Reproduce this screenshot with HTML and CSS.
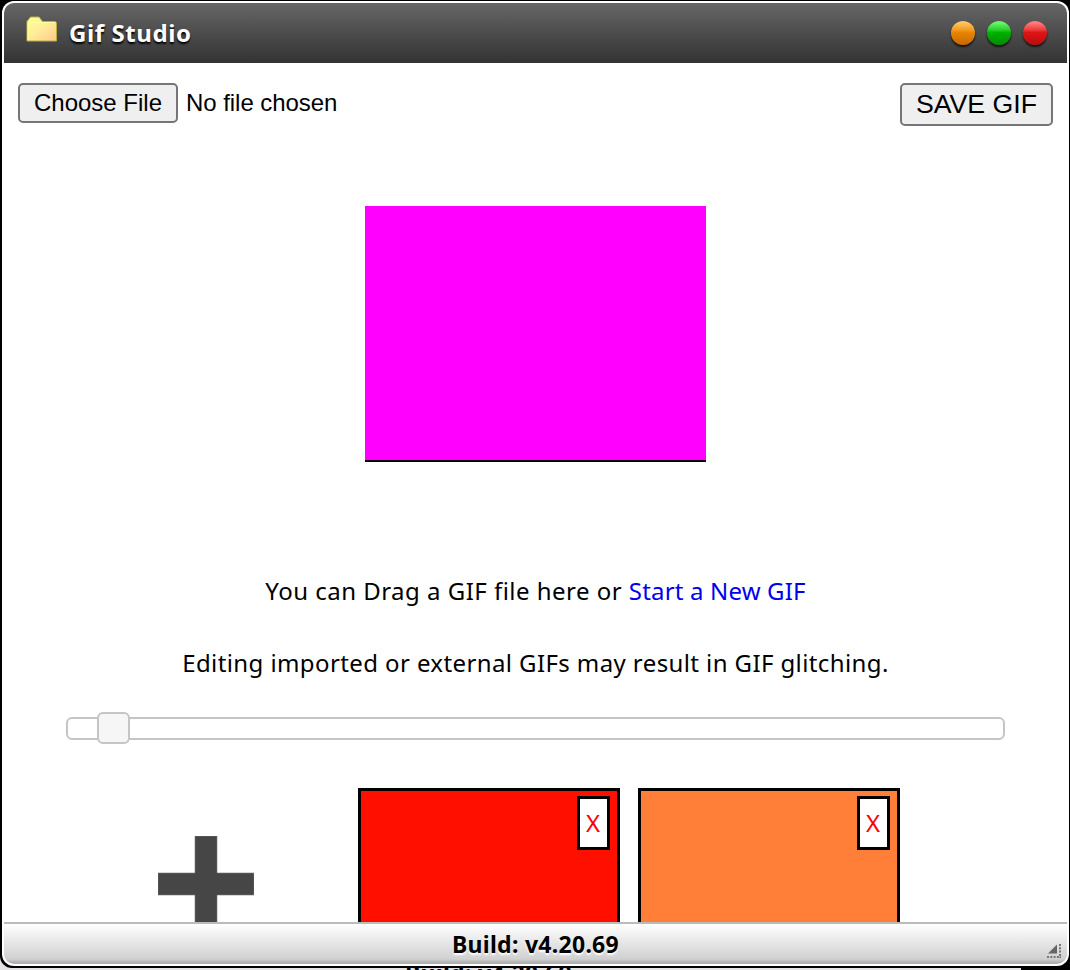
FILE: index.html
```html
<!DOCTYPE html>
<html lang="en">
<head>
<meta charset="utf-8">
<title>Gif Studio</title>
<link rel="stylesheet" href="styles.css">
</head>
<body>
<div class="backdrop"><span class="backdrop-text">Build: v4.20.69</span></div>
<div class="window">
  <header class="titlebar">
    <svg class="folder" width="32" height="28" viewBox="0 0 32 28">
      <defs><linearGradient id="fold" x1="0" y1="0" x2="1" y2="1"><stop offset="0" stop-color="#ffff91"/><stop offset=".45" stop-color="#ffee98"/><stop offset="1" stop-color="#ffc98d"/></linearGradient></defs>
      <path d="M1 25V5.500L4.500 1H13L16.500 5.500H28.500Q30.500 5.500 30.500 7.500V25Z" fill="url(#fold)" stroke="#b9ae45" stroke-width="1"/>
      <path d="M2 24V6.500H29.500" fill="none" stroke="#ffffa0" stroke-width="1"/>
    </svg>
    <h1 class="title">Gif Studio</h1>
    <div class="controls"><i class="dot amber"></i><i class="dot green"></i><i class="dot red"></i></div>
  </header>
  <main class="content">
    <div class="toolbar">
      <div class="picker"><button class="btn choose">Choose File</button><span class="picked">No file chosen</span></div>
      <button class="btn save">SAVE GIF</button>
    </div>
    <div class="preview"></div>
    <p class="message"><span class="drag">You can Drag a GIF file here or <a class="link">Start a New GIF</a></span></p>
    <p class="message second"><span class="warn">Editing imported or external GIFs may result in GIF glitching.</span></p>
    <div class="slider"><div class="handle"></div></div>
    <div class="frames">
      <div class="add"><svg width="96" height="96" viewBox="0 0 96 96"><path d="M37 0H59V37H96V59H59V96H37V59H0V37H37Z" fill="#464646" stroke="#777" stroke-width=".6"/></svg></div>
      <div class="frame first"><span class="remove">X</span></div>
      <div class="frame orange"><span class="remove">X</span></div>
    </div>
  </main>
  <footer class="status">
    <span class="build">Build: v4.20.69</span>
    <svg class="grip" width="16" height="16" viewBox="0 0 16 16"><path d="M2 10.500L11 1.500V10.500Z" fill="#666"/><path d="M14 1V15M1 14H15" fill="none" stroke="#777" stroke-width="2" stroke-dasharray="2 1.300"/></svg>
  </footer>
</div>
</body>
</html>
```
FILE: styles.css
```css
* { box-sizing: border-box; }
body { margin: 0; width: 1070px; height: 970px; overflow: hidden; background: #000; font-family: "Noto Sans", sans-serif; font-size: 24px; color: #000; }
.backdrop { position: absolute; left: 0; top: 950px; width: 1021px; height: 20px; background: #e4e2e4; overflow: hidden; }
.backdrop-text { position: absolute; left: 405px; top: 9px; font-size: 23px; line-height: 28px; font-weight: 700; letter-spacing: .28px; }
.window { position: relative; width: 1070px; height: 968px; padding: 1px 1px 2px 2px; background: #000; border-radius: 0 0 12px 12px; display: flex; flex-direction: column; }
.window::before { content: ""; position: absolute; left: 2px; top: 1px; width: 1067px; height: 965px; border-radius: 12px; background: #fff; }
.titlebar { position: relative; flex: none; height: 60px; margin: 2px 2px 0; border-radius: 10px 10px 0 0; background: linear-gradient(#666, #333); display: flex; align-items: center; padding: 0 20px 0 22px; }
.folder { margin-bottom: 7px; }
.title { margin: 0 0 0 11px; font-size: 24px; line-height: 32px; font-weight: 700; color: #fff; text-shadow: 0 2px 2px #000; letter-spacing: .6px; white-space: nowrap; }
.controls { margin-left: auto; display: flex; gap: 12px; }
.dot { width: 24px; height: 24px; border-radius: 50%; box-shadow: 0 2px 2px rgba(0,0,0,.75); }
.amber { background: linear-gradient(#ffc45e 8%, #f39a20 38%, #e78500 48%, #c86500); }
.green { background: linear-gradient(#68f568 8%, #27cd27 38%, #00b100 48%, #008b00); }
.red { background: linear-gradient(#ff7c7c 8%, #ed3838 38%, #dc1616 48%, #b90c0c); }
.content { position: relative; height: 859px; padding: 20px 16px 0; display: flex; flex-direction: column; overflow: hidden; }
.content > * { flex: none; }
.toolbar { display: flex; justify-content: space-between; align-items: flex-start; height: 43px; }
.picker { display: flex; align-items: center; gap: 8px; }
.btn { padding: 0; border: 2px solid #767676; border-radius: 5px; background: #efefef; color: #000; font-family: "Liberation Sans", sans-serif; white-space: nowrap; }
.choose { width: 160px; height: 40px; font-size: 24px; line-height: 34px; }
.picked { font-family: "Liberation Sans", sans-serif; font-size: 24px; line-height: 40px; letter-spacing: -.05px; white-space: nowrap; }
.save { width: 153px; height: 43px; font-size: 26.700px; line-height: 37px; }
.preview { align-self: center; width: 341px; height: 256px; margin-top: 80px; background: #f0f; border-bottom: 2px solid #000; }
.message { margin: 111px 0 0; text-align: center; line-height: 36px; height: 36px; white-space: nowrap; }
.second { margin-top: 36px; }
.drag { letter-spacing: .48px; }
.warn { letter-spacing: .4px; }
.link { color: #00e; letter-spacing: .17px; }
.slider { margin: 36px 48px 0; height: 23px; border: 2px solid #c5c5c5; border-radius: 6px; }
.handle { position: relative; left: 29px; top: -7px; width: 33px; height: 32px; border: 2px solid #c5c5c5; border-radius: 6px; background: #f6f6f6; }
.frames { display: flex; gap: 18px; margin: 48px 0 0 60px; }
.add { width: 262px; padding: 48px 0 0 80px; }
.frame { width: 262px; height: 196px; border: 3px solid #000; background: #ff0f00; display: flex; justify-content: flex-end; align-items: flex-start; padding: 5px 7px; }
.orange { background: #ff7f38; }
.remove { width: 33px; height: 54px; border: 3px solid #000; background: #fff; color: #f00; text-align: center; line-height: 48px; padding-right: 1px; }
.status { position: relative; flex: none; margin: 0 2px; height: 42px; border-top: 2px solid #bbb; border-radius: 0 0 10px 10px; background: linear-gradient(#fff, #d0d0d0 88%, #b0b0b0 96%); display: flex; justify-content: center; align-items: center; }
.build { font-size: 23px; line-height: 30px; font-weight: 700; letter-spacing: .28px; text-shadow: 0 2px 2px #fff; white-space: nowrap; }
.grip { position: absolute; right: 5px; bottom: 5px; }
```
